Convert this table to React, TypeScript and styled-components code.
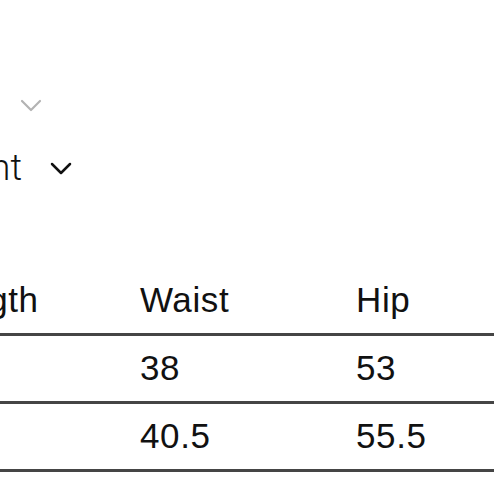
import React from "react";
import styled, { createGlobalStyle } from "styled-components";

const Global = createGlobalStyle`
  html, body { margin: 0; padding: 0; background: #ffffff; overflow: hidden; }
  body { width: 494px; height: 494px; }
`;

const Page = styled.div`
  width: 494px;
  height: 494px;
  overflow: hidden;
  display: flex;
  flex-direction: column;
  font-family: "Liberation Sans", Arial, sans-serif;
  color: #111;
`;

const Filters = styled.div`
  display: flex;
  flex-direction: column;
  padding-top: 98px;
  gap: 35px;
`;

const FilterRow = styled.div`
  display: flex;
  align-items: center;
  height: 14px;
`;

const SelectRow = styled.div`
  display: flex;
  align-items: center;
  height: 42px;
`;

const SelectLabel = styled.span`
  display: block;
  width: 240px;
  margin-left: -218px;
  text-align: right;
  font-family: Roboto, "Open Sans", sans-serif;
  font-weight: 300;
  font-size: 36px;
  line-height: 42px;
  color: #111;
  white-space: nowrap;
`;

const Chevron = styled.svg<{ $muted?: boolean; $offset: number }>`
  display: block;
  margin-left: ${(p) => p.$offset}px;
  color: ${(p) => (p.$muted ? "#b3b3b3" : "#111")};
`;

const Table = styled.table`
  margin-top: 79px;
  margin-left: -72px;
  width: 760px;
  border-collapse: collapse;
  font-size: 35px;
  line-height: 40px;
  letter-spacing: 0.6px;
`;

const Cell = styled.td<{ $w?: number }>`
  padding: 12px 0 13px 0;
  text-align: left;
  font-weight: 400;
  white-space: nowrap;
  ${(p) => (p.$w ? `width: ${p.$w}px;` : "")}
`;

const Row = styled.tr`
  border-bottom: 3px solid #454545;
`;

const ChevronIcon = ({ muted, offset, w, h }: { muted?: boolean; offset: number; w: number; h: number }) => (
  <Chevron $muted={muted} $offset={offset} width={w + 4} height={h + 4} viewBox={`0 0 ${w + 4} ${h + 4}`}>
    <polyline
      points={`2,2 ${w / 2 + 2},${h + 2} ${w + 2},2`}
      fill="none"
      stroke="currentColor"
      strokeWidth={muted ? 2.2 : 2.5}
      strokeLinecap="round"
      strokeLinejoin="round"
    />
  </Chevron>
);

const rows = [
  { size: "S", waist: "38", hip: "53" },
  { size: "M", waist: "40.5", hip: "55.5" },
];

export default function App() {
  return (
    <>
      <Global />
      <Page>
        <Filters>
          <FilterRow>
            <ChevronIcon muted offset={20} w={18} h={9} />
          </FilterRow>
          <SelectRow>
            <SelectLabel>Measurement</SelectLabel>
            <ChevronIcon offset={28} w={18} h={9} />
          </SelectRow>
        </Filters>
        <Table>
          <tbody>
            <Row>
              <Cell $w={212}>Length</Cell>
              <Cell $w={216}>Waist</Cell>
              <Cell>Hip</Cell>
            </Row>
            {rows.map((r) => (
              <Row key={r.size}>
                <Cell>{r.size}</Cell>
                <Cell>{r.waist}</Cell>
                <Cell>{r.hip}</Cell>
              </Row>
            ))}
          </tbody>
        </Table>
      </Page>
    </>
  );
}
